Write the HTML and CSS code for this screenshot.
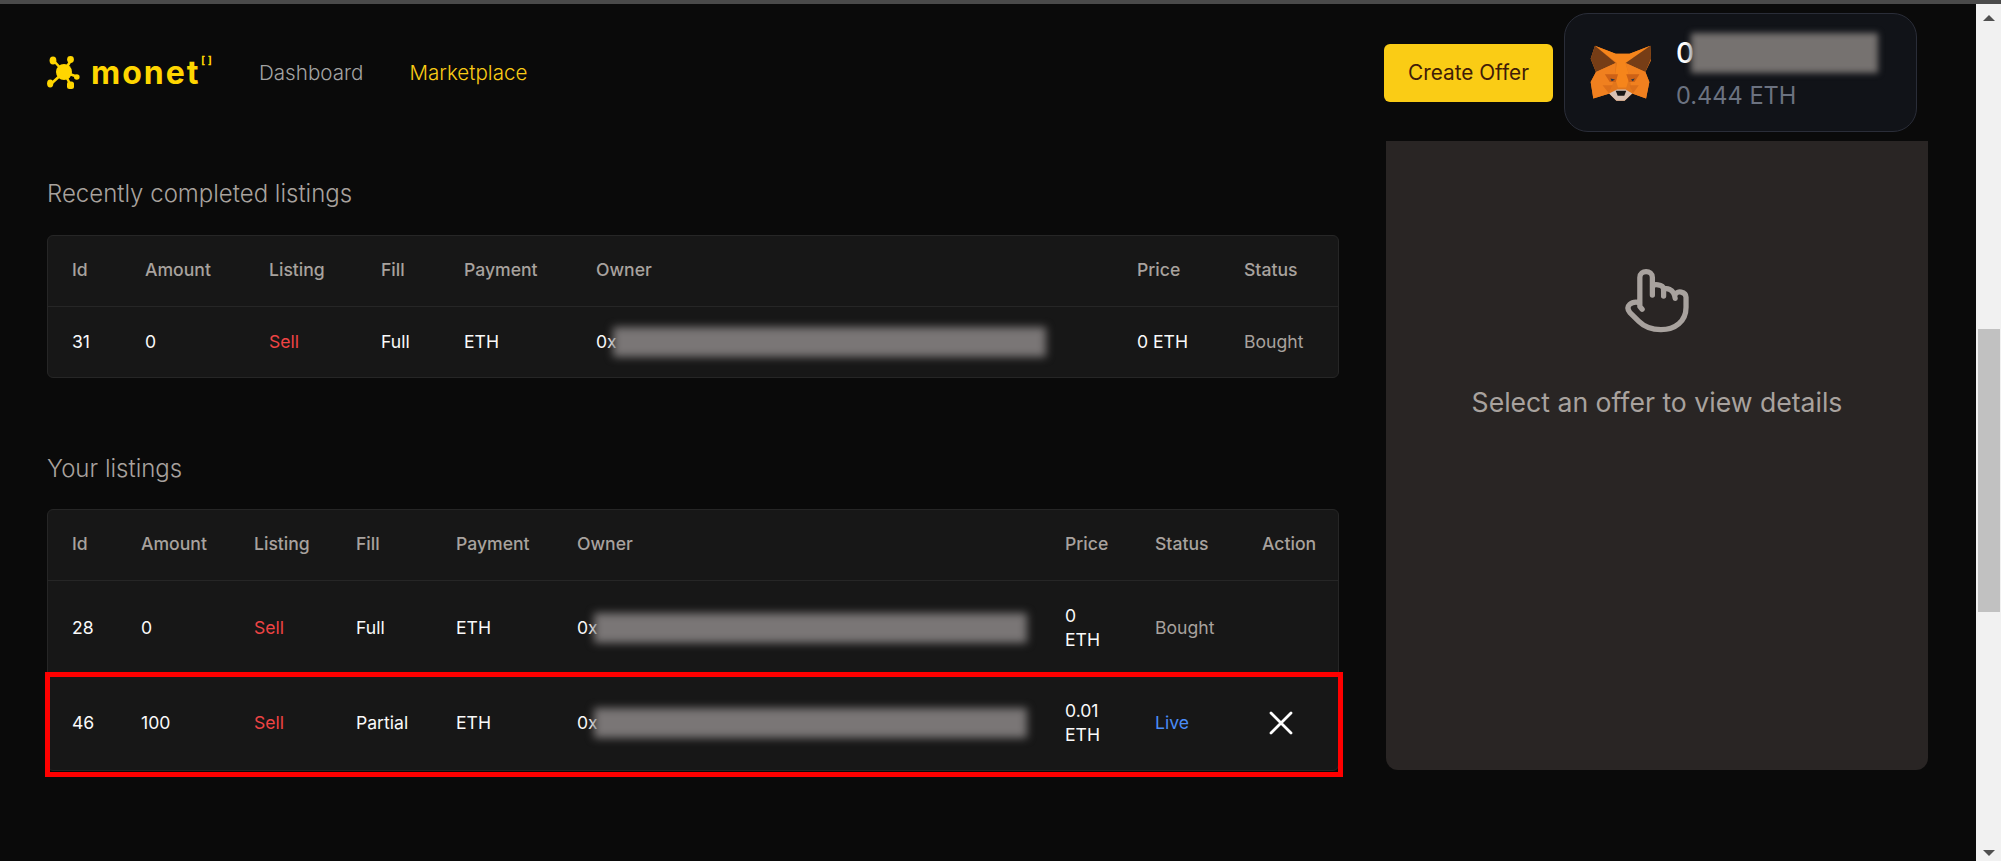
FILE: index.html
```html
<!DOCTYPE html>
<html lang="en">
<head>
<meta charset="utf-8">
<title>Monet Marketplace</title>
<link rel="stylesheet" href="styles.css">
</head>
<body>
<div class="topline"></div>
<div class="viewport">
  <div class="app">
    <header class="header">
      <div class="logo">
        <svg class="logo-mark" viewBox="0 0 33 33" aria-hidden="true">
          <g fill="#ffd600" stroke="#ffd600">
            <path d="M17 16 L7 5 M17 16 L24 4 M17 16 L5 27 M17 16 L31 21 M17 16 L24 30" stroke-width="2.6" fill="none"/>
            <circle cx="17" cy="16" r="8" stroke="none"/>
            <ellipse cx="6" cy="4.5" rx="3.4" ry="4" stroke="none"/>
            <circle cx="23.5" cy="3.5" r="3.4" stroke="none"/>
            <ellipse cx="3.2" cy="27.5" rx="3.1" ry="4" stroke="none"/>
            <circle cx="29.8" cy="21" r="2.8" stroke="none"/>
            <rect x="20" y="25.6" width="7" height="7.4" rx="2.5" stroke="none"/>
          </g>
        </svg>
        <span class="logo-word">monet</span><span class="logo-sup">[ ]</span>
      </div>
      <nav class="nav">
        <a class="nav-link">Dashboard</a>
        <a class="nav-link nav-active">Marketplace</a>
      </nav>
      <div class="header-right">
        <button class="create-btn">Create Offer</button>
        <div class="wallet">
          <svg class="fox" viewBox="30 42 188 172" aria-hidden="true">
            <polygon fill="#e2761b" points="45,45 108,70 150,70 213,45 215,90 198,125 210,155 200,205 158,190 135,212 110,212 88,190 40,205 32,155 48,125 32,85"/>
            <polygon fill="#f6851b" points="45,45 108,70 150,70 213,45 138,98 150,140 140,172 115,172 105,140 112,98"/>
            <polygon fill="#763d16" points="45,45 108,98 48,125 32,85"/>
            <polygon fill="#763d16" points="213,45 138,98 198,125 215,85"/>
            <polygon fill="#f0801f" points="48,125 108,98 105,140 90,190 40,205 32,155"/>
            <polygon fill="#f0801f" points="198,125 138,98 150,140 158,190 200,205 210,155"/>
            <polygon fill="#cd6116" points="75,132 115,132 108,155 90,155"/>
            <polygon fill="#cd6116" points="180,132 140,132 148,155 165,155"/>
            <polygon fill="#dc6f1a" points="68,165 98,165 88,190"/>
            <polygon fill="#dc6f1a" points="178,165 150,165 160,190"/>
            <polygon fill="#233447" points="92,145 106,148 96,153"/>
            <polygon fill="#233447" points="154,148 166,145 160,153"/>
            <polygon fill="#d7c1b3" points="88,190 112,178 138,178 158,190 135,212 110,212"/>
            <polygon fill="#161616" points="108,182 140,182 134,197 114,197"/>
          </svg>
          <div class="wallet-info">
            <div class="wallet-addr">0<span class="wallet-blur"></span></div>
            <div class="wallet-bal">0.444 ETH</div>
          </div>
        </div>
      </div>
    </header>

    <main class="main">
      <section class="listings">
        <h2 class="section-title first">Recently completed listings</h2>
        <div class="table-wrap">
          <table class="table recent">
            <colgroup><col><col><col><col><col><col><col><col></colgroup>
            <thead>
              <tr><th>Id</th><th>Amount</th><th>Listing</th><th>Fill</th><th>Payment</th><th>Owner</th><th>Price</th><th>Status</th></tr>
            </thead>
            <tbody>
              <tr><td>31</td><td>0</td><td class="sell">Sell</td><td>Full</td><td>ETH</td><td class="owner">0x<span class="blur"></span></td><td>0 ETH</td><td class="muted">Bought</td></tr>
            </tbody>
          </table>
        </div>

        <h2 class="section-title second">Your listings</h2>
        <div class="table-wrap">
          <table class="table yours">
            <colgroup><col><col><col><col><col><col><col><col><col></colgroup>
            <thead>
              <tr><th>Id</th><th>Amount</th><th>Listing</th><th>Fill</th><th>Payment</th><th>Owner</th><th>Price</th><th>Status</th><th>Action</th></tr>
            </thead>
            <tbody>
              <tr><td>28</td><td>0</td><td class="sell">Sell</td><td>Full</td><td>ETH</td><td class="owner">0x<span class="blur"></span></td><td>0 ETH</td><td class="muted">Bought</td><td></td></tr>
              <tr><td>46</td><td>100</td><td class="sell">Sell</td><td>Partial</td><td>ETH</td><td class="owner">0x<span class="blur"></span></td><td>0.01 ETH</td><td class="live">Live</td><td>
                <svg class="close" viewBox="0 0 24 24" aria-hidden="true"><path d="M2 2 L22 22 M22 2 L2 22"/></svg>
              </td></tr>
            </tbody>
          </table>
          <div class="highlight"></div>
        </div>
      </section>

      <aside class="details">
        <svg class="hand" viewBox="0 0 200 200" aria-hidden="true">
          <path d="M55 128 L48 120 V32 C48 8 86 8 86 32 V85 M86 60 C88 50 118 52 120 66 V88 M120 70 C124 60 152 66 155 95 M155 84 C160 70 188 74 188 92 V122 C188 165 155 190 112 190 C85 190 62 182 45 165 L18 138 C2 118 22 102 48 108"/>
        </svg>
        <p class="details-text">Select an offer to view details</p>
      </aside>
    </main>
  </div>
  <div class="scrollbar">
    <div class="arrow arrow-up"></div>
    <div class="track"><div class="thumb"></div></div>
    <div class="arrow arrow-down"></div>
  </div>
</div>
</body>
</html>
```

FILE: styles.css
```css
* { box-sizing: border-box; }
html, body { margin: 0; height: 861px; overflow: hidden; background: #0a0a0a; }
body { font-family: Inter, "Liberation Sans", sans-serif; color: #fafafa; }

.topline { height: 4px; background: #4a4a4a; }
.viewport { display: flex; height: 857px; }
.app { flex: 1; min-width: 0; background: #0a0a0a; }

.header { display: flex; align-items: center; height: 137px; padding: 0 59px 0 47px; }
.logo { display: flex; align-items: center; width: 212px; position: relative; }
.logo-mark { width: 33px; height: 33px; flex: none; }
.logo-word { margin-left: 11px; font-size: 32px; font-weight: 700; color: #ffd600; letter-spacing: 2px; line-height: 33px; }
.logo-sup { position: absolute; left: 154px; top: -3px; font-size: 11px; font-weight: 700; color: #ffd600; line-height: 14px; }

.nav { display: flex; gap: 46px; }
.nav-link { font-size: 20.6px; font-weight: 300; color: #a3a3a3; line-height: 28px; }
.nav-active { color: #facc15; }

.header-right { margin-left: auto; display: flex; align-items: center; gap: 11px; }
.create-btn { width: 169px; height: 58px; border: 0; border-radius: 6px; background: #facc15; color: #3f1c08; font: 400 20.8px Inter, sans-serif; }
.wallet { display: flex; align-items: center; width: 353px; height: 119px; padding-left: 25px; gap: 24px; background: #111318; border: 1px solid #2a2d38; border-radius: 24px; }
.fox { width: 62px; height: 60px; flex: none; }
.wallet-info { display: flex; flex-direction: column; padding-top: 3px; }
.wallet-addr { display: flex; align-items: center; height: 32px; font-size: 28px; font-weight: 500; color: #fff; }
.wallet-blur { display: block; width: 187px; height: 40px; margin-left: -3px; background: #767270; filter: blur(3px); }
.wallet-bal { font-size: 23.6px; color: #6b7280; line-height: 32px; margin-top: 11px; }

.main { display: flex; gap: 47px; padding: 0 48px 0 47px; }
.listings { width: 1292px; flex: none; }
.section-title { margin: 0; font-size: 24px; font-weight: 300; line-height: 32px; color: #a8a29e; }
.section-title.first { margin-top: 37px; margin-bottom: 25px; }
.section-title.second { margin-top: 75px; margin-bottom: 24px; }

.table-wrap { position: relative; background: #171717; border: 1px solid #262626; border-radius: 6px; }
.table { width: 100%; table-layout: fixed; border-collapse: collapse; font-size: 17.6px; line-height: 24px; }
.table th { height: 70px; padding: 0 24px 2px; text-align: left; font-weight: 500; color: #a8a29e; }
.table td { padding: 0 24px; color: #fafafa; border-top: 1px solid #262626; }
.recent td { height: 71px; }
.yours td { height: 95px; }

.recent col:nth-child(1) { width: 73px; }
.recent col:nth-child(2) { width: 124px; }
.recent col:nth-child(3) { width: 112px; }
.recent col:nth-child(4) { width: 83px; }
.recent col:nth-child(5) { width: 132px; }
.recent col:nth-child(6) { width: 541px; }
.recent col:nth-child(7) { width: 107px; }
.recent col:nth-child(8) { width: 118px; }

.yours col:nth-child(1) { width: 69px; }
.yours col:nth-child(2) { width: 113px; }
.yours col:nth-child(3) { width: 102px; }
.yours col:nth-child(4) { width: 100px; }
.yours col:nth-child(5) { width: 121px; }
.yours col:nth-child(6) { width: 488px; }
.yours col:nth-child(7) { width: 90px; }
.yours col:nth-child(8) { width: 107px; }
.yours col:nth-child(9) { width: 100px; }

.table td.sell { color: #ef4444; }
.table td.muted { color: #a8a29e; }
.table td.live { color: #4a8cf7; }
.table td.owner { white-space: nowrap; }
.blur { display: inline-block; vertical-align: -9px; width: 433px; height: 30px; margin-left: -4px; background: #7a7676; filter: blur(4px); }
.close { display: block; width: 24px; height: 24px; margin-left: 7px; fill: none; stroke: #fff; stroke-width: 2.8; stroke-linecap: round; }

.highlight { position: absolute; left: -3px; right: -5px; bottom: -7px; height: 105px; border: 5px solid #ff0000; pointer-events: none; }

.details { width: 542px; flex: none; height: 629px; display: flex; flex-direction: column; align-items: center; padding-top: 126px; background: #292524; border-radius: 0 0 12px 12px; }
.hand { width: 66px; height: 66px; fill: none; stroke: #a8a29e; stroke-width: 16; stroke-linecap: round; stroke-linejoin: round; }
.details-text { margin: 53px 0 0; font-size: 26.6px; line-height: 32px; font-weight: 400; color: #a8a29e; }

.scrollbar { width: 25px; flex: none; display: flex; flex-direction: column; align-items: center; background: #f1f1f1; }
.arrow { width: 0; height: 0; border-left: 6px solid transparent; border-right: 6px solid transparent; flex: none; }
.arrow-up { border-bottom: 6px solid #505050; margin-top: 11px; }
.arrow-down { border-top: 6px solid #505050; margin-bottom: 5px; }
.track { flex: 1; width: 100%; padding: 308px 1px 0 2px; }
.thumb { height: 283px; background: #c1c1c1; }
```
